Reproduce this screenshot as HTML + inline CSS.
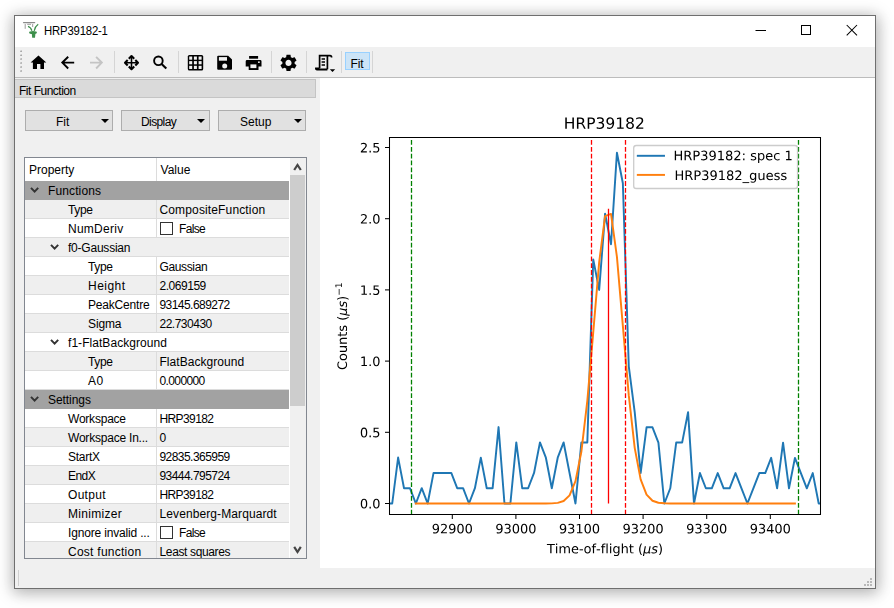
<!DOCTYPE html>
<html><head><meta charset="utf-8"><style>
*{margin:0;padding:0;box-sizing:border-box}
html,body{width:894px;height:608px;overflow:hidden;background:#fff;font-family:"Liberation Sans",sans-serif;font-size:12px;color:#000}
.abs{position:absolute}
#win{position:absolute;left:14px;top:15px;width:862px;height:574px;border:1px solid #6f6f6f;background:#f0f0f0;box-shadow:0 2px 14px 2px rgba(0,0,0,0.26),3px 4px 16px 0 rgba(0,0,0,0.07)}
#title{position:absolute;left:0;top:0;width:860px;height:31px;background:#fff}
#ttext{position:absolute;left:29px;top:8px;font-size:12.6px;letter-spacing:-0.2px;transform:scaleX(0.9);transform-origin:0 0}
#tb{position:absolute;left:0;top:31px;width:860px;height:31px;background:#f0f0f0;border-bottom:1px solid #bcbcbc}
.sep{position:absolute;top:4px;width:1px;height:22px;background:#d4d4d4}
#dock{position:absolute;left:0;top:62px;width:305px;height:490px;background:#f0f0f0}
#dtitle{position:absolute;left:0;top:1px;width:301px;height:19px;background:#dadada;border:1px solid #c4c4c4;border-left:none}
#dtitle span{position:absolute;left:4px;top:4px;letter-spacing:-0.5px}
.btn{position:absolute;top:32px;height:21px;background:#e1e1e1;border:1px solid #adadad}
.btn .t{position:absolute;top:4px}
.btn .ar{position:absolute;top:8px;width:0;height:0;border-left:4px solid transparent;border-right:4px solid transparent;border-top:4px solid #000}
#tree{position:absolute;left:9px;top:79px;width:283px;height:402px;border:1px solid #828790;background:#fff;overflow:hidden}
#thdr{position:absolute;left:0;top:0;width:264px;height:23px;background:#fff}
#thdr .lab{top:5px}
.row{position:absolute;left:0;width:264px;height:19px;background:#fff;border-bottom:1px solid #dcdcdc}
.row.alt{background:#efefef}
.row.hdr{background:#a2a2a2;border-bottom:1px solid #a2a2a2}
.lab{position:absolute;top:3px;white-space:nowrap}
.csep{position:absolute;left:131px;top:0;width:1px;height:19px;background:#dcdcdc}
.chv{position:absolute;top:6px;line-height:0}
.cb{position:absolute;left:135px;top:3px;width:13px;height:13px;border:1px solid #333;background:#fff}
#sb{position:absolute;left:265px;top:0;width:16px;height:400px;background:#f0f0f0}
#thumb{position:absolute;left:0;top:17px;width:15px;height:231px;background:#cdcdcd}
#canvas{position:absolute;left:305px;top:62px;width:555px;height:490px;background:#fff}
#status{position:absolute;left:0;top:552px;width:860px;height:20px;background:#f0f0f0}
</style></head><body>
<div id="win">
 <div id="title">
  <div id="ttext">HRP39182-1</div>
 </div>
 <div id="tb"></div>
 <div id="dock">
  <div id="dtitle"><span>Fit Function</span></div>
  <div class="btn" style="left:10px;width:88px"><span class="t" style="left:30px">Fit</span><span class="ar" style="left:75px"></span></div>
  <div class="btn" style="left:106px;width:89px"><span class="t" style="left:19px;letter-spacing:-0.6px">Display</span><span class="ar" style="left:75px"></span></div>
  <div class="btn" style="left:203px;width:88px"><span class="t" style="left:21px">Setup</span><span class="ar" style="left:75px"></span></div>
  <div id="tree">
   <div id="thdr"><span class="lab" style="left:4px;letter-spacing:0.00px;">Property</span><span class="lab" style="left:135.5px;letter-spacing:0.03px;">Value</span><span class="csep" style="height:23px"></span></div>
<div class="row hdr" style="top:23px"><span class="chv" style="left:5px"><svg class="chev" width="10" height="8" viewBox="0 0 10 8"><path d="M1 0.9 L4.6 4.6 L8.2 0.9" fill="none" stroke="#333" stroke-width="2"/></svg></span><span class="lab" style="left:23px;letter-spacing:0.12px;">Functions</span></div>
<div class="row alt" style="top:42px"><span class="lab" style="left:43px;letter-spacing:-0.33px;">Type</span><span class="csep"></span><span class="lab" style="left:134.5px;letter-spacing:0.14px;">CompositeFunction</span></div>
<div class="row " style="top:61px"><span class="lab" style="left:43px;letter-spacing:0.26px;">NumDeriv</span><span class="csep"></span><span class="cb"></span><span class="lab" style="left:154px;letter-spacing:-0.67px;">False</span></div>
<div class="row alt" style="top:80px"><span class="chv" style="left:25px"><svg class="chev" width="10" height="8" viewBox="0 0 10 8"><path d="M1 0.9 L4.6 4.6 L8.2 0.9" fill="none" stroke="#333" stroke-width="2"/></svg></span><span class="lab" style="left:43px;letter-spacing:-0.22px;">f0-Gaussian</span></div>
<div class="row " style="top:99px"><span class="lab" style="left:63px;letter-spacing:-0.33px;">Type</span><span class="csep"></span><span class="lab" style="left:134.5px;letter-spacing:-0.37px;">Gaussian</span></div>
<div class="row alt" style="top:118px"><span class="lab" style="left:63px;letter-spacing:0.46px;">Height</span><span class="csep"></span><span class="lab" style="left:134.5px;letter-spacing:-0.47px;">2.069159</span></div>
<div class="row " style="top:137px"><span class="lab" style="left:63px;letter-spacing:-0.19px;">PeakCentre</span><span class="csep"></span><span class="lab" style="left:134.5px;letter-spacing:-0.55px;">93145.689272</span></div>
<div class="row alt" style="top:156px"><span class="lab" style="left:63px;letter-spacing:-0.12px;">Sigma</span><span class="csep"></span><span class="lab" style="left:134.5px;letter-spacing:-0.50px;">22.730430</span></div>
<div class="row " style="top:175px"><span class="chv" style="left:25px"><svg class="chev" width="10" height="8" viewBox="0 0 10 8"><path d="M1 0.9 L4.6 4.6 L8.2 0.9" fill="none" stroke="#333" stroke-width="2"/></svg></span><span class="lab" style="left:43px;letter-spacing:0.05px;">f1-FlatBackground</span></div>
<div class="row alt" style="top:194px"><span class="lab" style="left:63px;letter-spacing:-0.33px;">Type</span><span class="csep"></span><span class="lab" style="left:134.5px;letter-spacing:0.04px;">FlatBackground</span></div>
<div class="row " style="top:213px"><span class="lab" style="left:63px;letter-spacing:0.50px;">A0</span><span class="csep"></span><span class="lab" style="left:134.5px;letter-spacing:-0.61px;">0.000000</span></div>
<div class="row hdr" style="top:232px"><span class="chv" style="left:5px"><svg class="chev" width="10" height="8" viewBox="0 0 10 8"><path d="M1 0.9 L4.6 4.6 L8.2 0.9" fill="none" stroke="#333" stroke-width="2"/></svg></span><span class="lab" style="left:23px;letter-spacing:-0.06px;">Settings</span></div>
<div class="row " style="top:251px"><span class="lab" style="left:43px;letter-spacing:-0.22px;">Workspace</span><span class="csep"></span><span class="lab" style="left:134.5px;letter-spacing:-0.61px;">HRP39182</span></div>
<div class="row alt" style="top:270px"><span class="lab" style="left:43px;letter-spacing:-0.21px;">Workspace In...</span><span class="csep"></span><span class="lab" style="left:134.5px;">0</span></div>
<div class="row " style="top:289px"><span class="lab" style="left:43px;letter-spacing:-0.28px;">StartX</span><span class="csep"></span><span class="lab" style="left:134.5px;letter-spacing:-0.55px;">92835.365959</span></div>
<div class="row alt" style="top:308px"><span class="lab" style="left:43px;letter-spacing:-0.53px;">EndX</span><span class="csep"></span><span class="lab" style="left:134.5px;letter-spacing:-0.55px;">93444.795724</span></div>
<div class="row " style="top:327px"><span class="lab" style="left:43px;letter-spacing:0.30px;">Output</span><span class="csep"></span><span class="lab" style="left:134.5px;letter-spacing:-0.61px;">HRP39182</span></div>
<div class="row alt" style="top:346px"><span class="lab" style="left:43px;letter-spacing:0.30px;">Minimizer</span><span class="csep"></span><span class="lab" style="left:134.5px;letter-spacing:0.10px;">Levenberg-Marquardt</span></div>
<div class="row " style="top:365px"><span class="lab" style="left:43px;letter-spacing:-0.17px;">Ignore invalid ...</span><span class="csep"></span><span class="cb"></span><span class="lab" style="left:154px;letter-spacing:-0.67px;">False</span></div>
<div class="row alt" style="top:384px"><span class="lab" style="left:43px;letter-spacing:0.26px;">Cost function</span><span class="csep"></span><span class="lab" style="left:134.5px;letter-spacing:-0.36px;">Least squares</span></div>
   <div id="sb"><div id="thumb"></div></div>
  </div>
 </div>
 <div id="canvas"><svg width="555" height="490" viewBox="0 0 429.677419 379.354839" version="1.1">
<defs>
<style type="text/css">#canvas svg *{stroke-linejoin: round; stroke-linecap: butt}</style>
</defs>
<g id="figure_1">
<g id="patch_1">
<path d="M 0 379.354839 
L 429.677419 379.354839 
L 429.677419 0 
L 0 0 
z
" style="fill: #ffffff"/>
</g>
<g id="axes_1">
<g id="patch_2">
<path d="M 53.806452 337.935484 
L 387.483871 337.935484 
L 387.483871 46.064516 
L 53.806452 46.064516 
z
" style="fill: #ffffff"/>
</g>
<g id="matplotlib.axis_1">
<g id="xtick_1">
<g id="line2d_1">
<defs>
<path id="m1504cfccaf" d="M 0 0 
L 0 3.5 
" style="stroke: #000000; stroke-width: 0.8"/>
</defs>
<g>
<use href="#m1504cfccaf" x="102.424966" y="337.935484" style="stroke: #000000; stroke-width: 0.8"/>
</g>
</g>
<g id="text_1">
<!-- 92900 -->
<g transform="translate(86.518716 352.533921) scale(0.1 -0.1)">
<defs>
<path id="DejaVuSans-39" d="M 703 97 
L 703 672 
Q 941 559 1184 500 
Q 1428 441 1663 441 
Q 2288 441 2617 861 
Q 2947 1281 2994 2138 
Q 2813 1869 2534 1725 
Q 2256 1581 1919 1581 
Q 1219 1581 811 2004 
Q 403 2428 403 3163 
Q 403 3881 828 4315 
Q 1253 4750 1959 4750 
Q 2769 4750 3195 4129 
Q 3622 3509 3622 2328 
Q 3622 1225 3098 567 
Q 2575 -91 1691 -91 
Q 1453 -91 1209 -44 
Q 966 3 703 97 
z
M 1959 2075 
Q 2384 2075 2632 2365 
Q 2881 2656 2881 3163 
Q 2881 3666 2632 3958 
Q 2384 4250 1959 4250 
Q 1534 4250 1286 3958 
Q 1038 3666 1038 3163 
Q 1038 2656 1286 2365 
Q 1534 2075 1959 2075 
z
" transform="scale(0.015625)"/>
<path id="DejaVuSans-32" d="M 1228 531 
L 3431 531 
L 3431 0 
L 469 0 
L 469 531 
Q 828 903 1448 1529 
Q 2069 2156 2228 2338 
Q 2531 2678 2651 2914 
Q 2772 3150 2772 3378 
Q 2772 3750 2511 3984 
Q 2250 4219 1831 4219 
Q 1534 4219 1204 4116 
Q 875 4013 500 3803 
L 500 4441 
Q 881 4594 1212 4672 
Q 1544 4750 1819 4750 
Q 2544 4750 2975 4387 
Q 3406 4025 3406 3419 
Q 3406 3131 3298 2873 
Q 3191 2616 2906 2266 
Q 2828 2175 2409 1742 
Q 1991 1309 1228 531 
z
" transform="scale(0.015625)"/>
<path id="DejaVuSans-30" d="M 2034 4250 
Q 1547 4250 1301 3770 
Q 1056 3291 1056 2328 
Q 1056 1369 1301 889 
Q 1547 409 2034 409 
Q 2525 409 2770 889 
Q 3016 1369 3016 2328 
Q 3016 3291 2770 3770 
Q 2525 4250 2034 4250 
z
M 2034 4750 
Q 2819 4750 3233 4129 
Q 3647 3509 3647 2328 
Q 3647 1150 3233 529 
Q 2819 -91 2034 -91 
Q 1250 -91 836 529 
Q 422 1150 422 2328 
Q 422 3509 836 4129 
Q 1250 4750 2034 4750 
z
" transform="scale(0.015625)"/>
</defs>
<use href="#DejaVuSans-39"/>
<use href="#DejaVuSans-32" transform="translate(63.623047 0)"/>
<use href="#DejaVuSans-39" transform="translate(127.246094 0)"/>
<use href="#DejaVuSans-30" transform="translate(190.869141 0)"/>
<use href="#DejaVuSans-30" transform="translate(254.492188 0)"/>
</g>
</g>
</g>
<g id="xtick_2">
<g id="line2d_2">
<g>
<use href="#m1504cfccaf" x="151.66389" y="337.935484" style="stroke: #000000; stroke-width: 0.8"/>
</g>
</g>
<g id="text_2">
<!-- 93000 -->
<g transform="translate(135.75764 352.533921) scale(0.1 -0.1)">
<defs>
<path id="DejaVuSans-33" d="M 2597 2516 
Q 3050 2419 3304 2112 
Q 3559 1806 3559 1356 
Q 3559 666 3084 287 
Q 2609 -91 1734 -91 
Q 1441 -91 1130 -33 
Q 819 25 488 141 
L 488 750 
Q 750 597 1062 519 
Q 1375 441 1716 441 
Q 2309 441 2620 675 
Q 2931 909 2931 1356 
Q 2931 1769 2642 2001 
Q 2353 2234 1838 2234 
L 1294 2234 
L 1294 2753 
L 1863 2753 
Q 2328 2753 2575 2939 
Q 2822 3125 2822 3475 
Q 2822 3834 2567 4026 
Q 2313 4219 1838 4219 
Q 1578 4219 1281 4162 
Q 984 4106 628 3988 
L 628 4550 
Q 988 4650 1302 4700 
Q 1616 4750 1894 4750 
Q 2613 4750 3031 4423 
Q 3450 4097 3450 3541 
Q 3450 3153 3228 2886 
Q 3006 2619 2597 2516 
z
" transform="scale(0.015625)"/>
</defs>
<use href="#DejaVuSans-39"/>
<use href="#DejaVuSans-33" transform="translate(63.623047 0)"/>
<use href="#DejaVuSans-30" transform="translate(127.246094 0)"/>
<use href="#DejaVuSans-30" transform="translate(190.869141 0)"/>
<use href="#DejaVuSans-30" transform="translate(254.492188 0)"/>
</g>
</g>
</g>
<g id="xtick_3">
<g id="line2d_3">
<g>
<use href="#m1504cfccaf" x="200.902815" y="337.935484" style="stroke: #000000; stroke-width: 0.8"/>
</g>
</g>
<g id="text_3">
<!-- 93100 -->
<g transform="translate(184.996565 352.533921) scale(0.1 -0.1)">
<defs>
<path id="DejaVuSans-31" d="M 794 531 
L 1825 531 
L 1825 4091 
L 703 3866 
L 703 4441 
L 1819 4666 
L 2450 4666 
L 2450 531 
L 3481 531 
L 3481 0 
L 794 0 
L 794 531 
z
" transform="scale(0.015625)"/>
</defs>
<use href="#DejaVuSans-39"/>
<use href="#DejaVuSans-33" transform="translate(63.623047 0)"/>
<use href="#DejaVuSans-31" transform="translate(127.246094 0)"/>
<use href="#DejaVuSans-30" transform="translate(190.869141 0)"/>
<use href="#DejaVuSans-30" transform="translate(254.492188 0)"/>
</g>
</g>
</g>
<g id="xtick_4">
<g id="line2d_4">
<g>
<use href="#m1504cfccaf" x="250.141739" y="337.935484" style="stroke: #000000; stroke-width: 0.8"/>
</g>
</g>
<g id="text_4">
<!-- 93200 -->
<g transform="translate(234.235489 352.533921) scale(0.1 -0.1)">
<use href="#DejaVuSans-39"/>
<use href="#DejaVuSans-33" transform="translate(63.623047 0)"/>
<use href="#DejaVuSans-32" transform="translate(127.246094 0)"/>
<use href="#DejaVuSans-30" transform="translate(190.869141 0)"/>
<use href="#DejaVuSans-30" transform="translate(254.492188 0)"/>
</g>
</g>
</g>
<g id="xtick_5">
<g id="line2d_5">
<g>
<use href="#m1504cfccaf" x="299.380663" y="337.935484" style="stroke: #000000; stroke-width: 0.8"/>
</g>
</g>
<g id="text_5">
<!-- 93300 -->
<g transform="translate(283.474413 352.533921) scale(0.1 -0.1)">
<use href="#DejaVuSans-39"/>
<use href="#DejaVuSans-33" transform="translate(63.623047 0)"/>
<use href="#DejaVuSans-33" transform="translate(127.246094 0)"/>
<use href="#DejaVuSans-30" transform="translate(190.869141 0)"/>
<use href="#DejaVuSans-30" transform="translate(254.492188 0)"/>
</g>
</g>
</g>
<g id="xtick_6">
<g id="line2d_6">
<g>
<use href="#m1504cfccaf" x="348.619588" y="337.935484" style="stroke: #000000; stroke-width: 0.8"/>
</g>
</g>
<g id="text_6">
<!-- 93400 -->
<g transform="translate(332.713338 352.533921) scale(0.1 -0.1)">
<defs>
<path id="DejaVuSans-34" d="M 2419 4116 
L 825 1625 
L 2419 1625 
L 2419 4116 
z
M 2253 4666 
L 3047 4666 
L 3047 1625 
L 3713 1625 
L 3713 1100 
L 3047 1100 
L 3047 0 
L 2419 0 
L 2419 1100 
L 313 1100 
L 313 1709 
L 2253 4666 
z
" transform="scale(0.015625)"/>
</defs>
<use href="#DejaVuSans-39"/>
<use href="#DejaVuSans-33" transform="translate(63.623047 0)"/>
<use href="#DejaVuSans-34" transform="translate(127.246094 0)"/>
<use href="#DejaVuSans-30" transform="translate(190.869141 0)"/>
<use href="#DejaVuSans-30" transform="translate(254.492188 0)"/>
</g>
</g>
</g>
<g id="text_7">
<!-- Time-of-flight ($\mu s$) -->
<g transform="translate(175.695161 368.013609) scale(0.1 -0.1)">
<defs>
<path id="DejaVuSans-54" d="M -19 4666 
L 3928 4666 
L 3928 4134 
L 2272 4134 
L 2272 0 
L 1638 0 
L 1638 4134 
L -19 4134 
L -19 4666 
z
" transform="scale(0.015625)"/>
<path id="DejaVuSans-69" d="M 603 3500 
L 1178 3500 
L 1178 0 
L 603 0 
L 603 3500 
z
M 603 4863 
L 1178 4863 
L 1178 4134 
L 603 4134 
L 603 4863 
z
" transform="scale(0.015625)"/>
<path id="DejaVuSans-6d" d="M 3328 2828 
Q 3544 3216 3844 3400 
Q 4144 3584 4550 3584 
Q 5097 3584 5394 3201 
Q 5691 2819 5691 2113 
L 5691 0 
L 5113 0 
L 5113 2094 
Q 5113 2597 4934 2840 
Q 4756 3084 4391 3084 
Q 3944 3084 3684 2787 
Q 3425 2491 3425 1978 
L 3425 0 
L 2847 0 
L 2847 2094 
Q 2847 2600 2669 2842 
Q 2491 3084 2119 3084 
Q 1678 3084 1418 2786 
Q 1159 2488 1159 1978 
L 1159 0 
L 581 0 
L 581 3500 
L 1159 3500 
L 1159 2956 
Q 1356 3278 1631 3431 
Q 1906 3584 2284 3584 
Q 2666 3584 2933 3390 
Q 3200 3197 3328 2828 
z
" transform="scale(0.015625)"/>
<path id="DejaVuSans-65" d="M 3597 1894 
L 3597 1613 
L 953 1613 
Q 991 1019 1311 708 
Q 1631 397 2203 397 
Q 2534 397 2845 478 
Q 3156 559 3463 722 
L 3463 178 
Q 3153 47 2828 -22 
Q 2503 -91 2169 -91 
Q 1331 -91 842 396 
Q 353 884 353 1716 
Q 353 2575 817 3079 
Q 1281 3584 2069 3584 
Q 2775 3584 3186 3129 
Q 3597 2675 3597 1894 
z
M 3022 2063 
Q 3016 2534 2758 2815 
Q 2500 3097 2075 3097 
Q 1594 3097 1305 2825 
Q 1016 2553 972 2059 
L 3022 2063 
z
" transform="scale(0.015625)"/>
<path id="DejaVuSans-2d" d="M 313 2009 
L 1997 2009 
L 1997 1497 
L 313 1497 
L 313 2009 
z
" transform="scale(0.015625)"/>
<path id="DejaVuSans-6f" d="M 1959 3097 
Q 1497 3097 1228 2736 
Q 959 2375 959 1747 
Q 959 1119 1226 758 
Q 1494 397 1959 397 
Q 2419 397 2687 759 
Q 2956 1122 2956 1747 
Q 2956 2369 2687 2733 
Q 2419 3097 1959 3097 
z
M 1959 3584 
Q 2709 3584 3137 3096 
Q 3566 2609 3566 1747 
Q 3566 888 3137 398 
Q 2709 -91 1959 -91 
Q 1206 -91 779 398 
Q 353 888 353 1747 
Q 353 2609 779 3096 
Q 1206 3584 1959 3584 
z
" transform="scale(0.015625)"/>
<path id="DejaVuSans-66" d="M 2375 4863 
L 2375 4384 
L 1825 4384 
Q 1516 4384 1395 4259 
Q 1275 4134 1275 3809 
L 1275 3500 
L 2222 3500 
L 2222 3053 
L 1275 3053 
L 1275 0 
L 697 0 
L 697 3053 
L 147 3053 
L 147 3500 
L 697 3500 
L 697 3744 
Q 697 4328 969 4595 
Q 1241 4863 1831 4863 
L 2375 4863 
z
" transform="scale(0.015625)"/>
<path id="DejaVuSans-6c" d="M 603 4863 
L 1178 4863 
L 1178 0 
L 603 0 
L 603 4863 
z
" transform="scale(0.015625)"/>
<path id="DejaVuSans-67" d="M 2906 1791 
Q 2906 2416 2648 2759 
Q 2391 3103 1925 3103 
Q 1463 3103 1205 2759 
Q 947 2416 947 1791 
Q 947 1169 1205 825 
Q 1463 481 1925 481 
Q 2391 481 2648 825 
Q 2906 1169 2906 1791 
z
M 3481 434 
Q 3481 -459 3084 -895 
Q 2688 -1331 1869 -1331 
Q 1566 -1331 1297 -1286 
Q 1028 -1241 775 -1147 
L 775 -588 
Q 1028 -725 1275 -790 
Q 1522 -856 1778 -856 
Q 2344 -856 2625 -561 
Q 2906 -266 2906 331 
L 2906 616 
Q 2728 306 2450 153 
Q 2172 0 1784 0 
Q 1141 0 747 490 
Q 353 981 353 1791 
Q 353 2603 747 3093 
Q 1141 3584 1784 3584 
Q 2172 3584 2450 3431 
Q 2728 3278 2906 2969 
L 2906 3500 
L 3481 3500 
L 3481 434 
z
" transform="scale(0.015625)"/>
<path id="DejaVuSans-68" d="M 3513 2113 
L 3513 0 
L 2938 0 
L 2938 2094 
Q 2938 2591 2744 2837 
Q 2550 3084 2163 3084 
Q 1697 3084 1428 2787 
Q 1159 2491 1159 1978 
L 1159 0 
L 581 0 
L 581 4863 
L 1159 4863 
L 1159 2956 
Q 1366 3272 1645 3428 
Q 1925 3584 2291 3584 
Q 2894 3584 3203 3211 
Q 3513 2838 3513 2113 
z
" transform="scale(0.015625)"/>
<path id="DejaVuSans-74" d="M 1172 4494 
L 1172 3500 
L 2356 3500 
L 2356 3053 
L 1172 3053 
L 1172 1153 
Q 1172 725 1289 603 
Q 1406 481 1766 481 
L 2356 481 
L 2356 0 
L 1766 0 
Q 1100 0 847 248 
Q 594 497 594 1153 
L 594 3053 
L 172 3053 
L 172 3500 
L 594 3500 
L 594 4494 
L 1172 4494 
z
" transform="scale(0.015625)"/>
<path id="DejaVuSans-20" transform="scale(0.015625)"/>
<path id="DejaVuSans-28" d="M 1984 4856 
Q 1566 4138 1362 3434 
Q 1159 2731 1159 2009 
Q 1159 1288 1364 580 
Q 1569 -128 1984 -844 
L 1484 -844 
Q 1016 -109 783 600 
Q 550 1309 550 2009 
Q 550 2706 781 3412 
Q 1013 4119 1484 4856 
L 1984 4856 
z
" transform="scale(0.015625)"/>
<path id="DejaVuSans-Oblique-3bc" d="M -84 -1331 
L 856 3500 
L 1434 3500 
L 1009 1322 
Q 997 1256 987 1175 
Q 978 1094 978 1013 
Q 978 722 1161 565 
Q 1344 409 1684 409 
Q 2147 409 2431 671 
Q 2716 934 2816 1459 
L 3213 3500 
L 3788 3500 
L 3266 809 
Q 3253 750 3248 706 
Q 3244 663 3244 628 
Q 3244 531 3283 486 
Q 3322 441 3406 441 
Q 3438 441 3492 456 
Q 3547 472 3647 513 
L 3559 50 
Q 3422 -19 3297 -55 
Q 3172 -91 3053 -91 
Q 2847 -91 2730 40 
Q 2613 172 2613 403 
Q 2438 153 2195 31 
Q 1953 -91 1625 -91 
Q 1334 -91 1117 43 
Q 900 178 831 397 
L 494 -1331 
L -84 -1331 
z
" transform="scale(0.015625)"/>
<path id="DejaVuSans-Oblique-73" d="M 3200 3397 
L 3091 2853 
Q 2863 2978 2609 3040 
Q 2356 3103 2088 3103 
Q 1634 3103 1373 2948 
Q 1113 2794 1113 2528 
Q 1113 2219 1719 2053 
Q 1766 2041 1788 2034 
L 1972 1978 
Q 2547 1819 2739 1644 
Q 2931 1469 2931 1166 
Q 2931 609 2489 259 
Q 2047 -91 1331 -91 
Q 1053 -91 747 -37 
Q 441 16 72 128 
L 184 722 
Q 500 559 806 475 
Q 1113 391 1394 391 
Q 1816 391 2080 572 
Q 2344 753 2344 1031 
Q 2344 1331 1650 1516 
L 1591 1531 
L 1394 1581 
Q 956 1697 753 1886 
Q 550 2075 550 2369 
Q 550 2928 970 3256 
Q 1391 3584 2113 3584 
Q 2397 3584 2667 3537 
Q 2938 3491 3200 3397 
z
" transform="scale(0.015625)"/>
<path id="DejaVuSans-29" d="M 513 4856 
L 1013 4856 
Q 1481 4119 1714 3412 
Q 1947 2706 1947 2009 
Q 1947 1309 1714 600 
Q 1481 -109 1013 -844 
L 513 -844 
Q 928 -128 1133 580 
Q 1338 1288 1338 2009 
Q 1338 2731 1133 3434 
Q 928 4138 513 4856 
z
" transform="scale(0.015625)"/>
</defs>
<use href="#DejaVuSans-54" transform="translate(0 0.015625)"/>
<use href="#DejaVuSans-69" transform="translate(61.083984 0.015625)"/>
<use href="#DejaVuSans-6d" transform="translate(88.867188 0.015625)"/>
<use href="#DejaVuSans-65" transform="translate(186.279297 0.015625)"/>
<use href="#DejaVuSans-2d" transform="translate(247.802734 0.015625)"/>
<use href="#DejaVuSans-6f" transform="translate(283.886719 0.015625)"/>
<use href="#DejaVuSans-66" transform="translate(345.068359 0.015625)"/>
<use href="#DejaVuSans-2d" transform="translate(380.273438 0.015625)"/>
<use href="#DejaVuSans-66" transform="translate(416.357422 0.015625)"/>
<use href="#DejaVuSans-6c" transform="translate(451.5625 0.015625)"/>
<use href="#DejaVuSans-69" transform="translate(479.345703 0.015625)"/>
<use href="#DejaVuSans-67" transform="translate(507.128906 0.015625)"/>
<use href="#DejaVuSans-68" transform="translate(570.605469 0.015625)"/>
<use href="#DejaVuSans-74" transform="translate(633.984375 0.015625)"/>
<use href="#DejaVuSans-20" transform="translate(673.193359 0.015625)"/>
<use href="#DejaVuSans-28" transform="translate(704.980469 0.015625)"/>
<use href="#DejaVuSans-Oblique-3bc" transform="translate(743.994141 0.015625)"/>
<use href="#DejaVuSans-Oblique-73" transform="translate(807.617188 0.015625)"/>
<use href="#DejaVuSans-29" transform="translate(859.716797 0.015625)"/>
</g>
</g>
</g>
<g id="matplotlib.axis_2">
<g id="ytick_1">
<g id="line2d_7">
<defs>
<path id="m5d545ce8f8" d="M 0 0 
L -3.5 0 
" style="stroke: #000000; stroke-width: 0.8"/>
</defs>
<g>
<use href="#m5d545ce8f8" x="53.806452" y="329.419355" style="stroke: #000000; stroke-width: 0.8"/>
</g>
</g>
<g id="text_8">
<!-- 0.0 -->
<g transform="translate(30.903327 333.218574) scale(0.1 -0.1)">
<defs>
<path id="DejaVuSans-2e" d="M 684 794 
L 1344 794 
L 1344 0 
L 684 0 
L 684 794 
z
" transform="scale(0.015625)"/>
</defs>
<use href="#DejaVuSans-30"/>
<use href="#DejaVuSans-2e" transform="translate(63.623047 0)"/>
<use href="#DejaVuSans-30" transform="translate(95.410156 0)"/>
</g>
</g>
</g>
<g id="ytick_2">
<g id="line2d_8">
<g>
<use href="#m5d545ce8f8" x="53.806452" y="274.296774" style="stroke: #000000; stroke-width: 0.8"/>
</g>
</g>
<g id="text_9">
<!-- 0.5 -->
<g transform="translate(30.903327 278.095993) scale(0.1 -0.1)">
<defs>
<path id="DejaVuSans-35" d="M 691 4666 
L 3169 4666 
L 3169 4134 
L 1269 4134 
L 1269 2991 
Q 1406 3038 1543 3061 
Q 1681 3084 1819 3084 
Q 2600 3084 3056 2656 
Q 3513 2228 3513 1497 
Q 3513 744 3044 326 
Q 2575 -91 1722 -91 
Q 1428 -91 1123 -41 
Q 819 9 494 109 
L 494 744 
Q 775 591 1075 516 
Q 1375 441 1709 441 
Q 2250 441 2565 725 
Q 2881 1009 2881 1497 
Q 2881 1984 2565 2268 
Q 2250 2553 1709 2553 
Q 1456 2553 1204 2497 
Q 953 2441 691 2322 
L 691 4666 
z
" transform="scale(0.015625)"/>
</defs>
<use href="#DejaVuSans-30"/>
<use href="#DejaVuSans-2e" transform="translate(63.623047 0)"/>
<use href="#DejaVuSans-35" transform="translate(95.410156 0)"/>
</g>
</g>
</g>
<g id="ytick_3">
<g id="line2d_9">
<g>
<use href="#m5d545ce8f8" x="53.806452" y="219.174194" style="stroke: #000000; stroke-width: 0.8"/>
</g>
</g>
<g id="text_10">
<!-- 1.0 -->
<g transform="translate(30.903327 222.973412) scale(0.1 -0.1)">
<use href="#DejaVuSans-31"/>
<use href="#DejaVuSans-2e" transform="translate(63.623047 0)"/>
<use href="#DejaVuSans-30" transform="translate(95.410156 0)"/>
</g>
</g>
</g>
<g id="ytick_4">
<g id="line2d_10">
<g>
<use href="#m5d545ce8f8" x="53.806452" y="164.051613" style="stroke: #000000; stroke-width: 0.8"/>
</g>
</g>
<g id="text_11">
<!-- 1.5 -->
<g transform="translate(30.903327 167.850832) scale(0.1 -0.1)">
<use href="#DejaVuSans-31"/>
<use href="#DejaVuSans-2e" transform="translate(63.623047 0)"/>
<use href="#DejaVuSans-35" transform="translate(95.410156 0)"/>
</g>
</g>
</g>
<g id="ytick_5">
<g id="line2d_11">
<g>
<use href="#m5d545ce8f8" x="53.806452" y="108.929032" style="stroke: #000000; stroke-width: 0.8"/>
</g>
</g>
<g id="text_12">
<!-- 2.0 -->
<g transform="translate(30.903327 112.728251) scale(0.1 -0.1)">
<use href="#DejaVuSans-32"/>
<use href="#DejaVuSans-2e" transform="translate(63.623047 0)"/>
<use href="#DejaVuSans-30" transform="translate(95.410156 0)"/>
</g>
</g>
</g>
<g id="ytick_6">
<g id="line2d_12">
<g>
<use href="#m5d545ce8f8" x="53.806452" y="53.806452" style="stroke: #000000; stroke-width: 0.8"/>
</g>
</g>
<g id="text_13">
<!-- 2.5 -->
<g transform="translate(30.903327 57.60567) scale(0.1 -0.1)">
<use href="#DejaVuSans-32"/>
<use href="#DejaVuSans-2e" transform="translate(63.623047 0)"/>
<use href="#DejaVuSans-35" transform="translate(95.410156 0)"/>
</g>
</g>
</g>
<g id="text_14">
<!-- Counts ($\mu s$)$^{-1}$ -->
<g transform="translate(20.903327 226.1) rotate(-90) scale(0.1 -0.1)">
<defs>
<path id="DejaVuSans-43" d="M 4122 4306 
L 4122 3641 
Q 3803 3938 3442 4084 
Q 3081 4231 2675 4231 
Q 1875 4231 1450 3742 
Q 1025 3253 1025 2328 
Q 1025 1406 1450 917 
Q 1875 428 2675 428 
Q 3081 428 3442 575 
Q 3803 722 4122 1019 
L 4122 359 
Q 3791 134 3420 21 
Q 3050 -91 2638 -91 
Q 1578 -91 968 557 
Q 359 1206 359 2328 
Q 359 3453 968 4101 
Q 1578 4750 2638 4750 
Q 3056 4750 3426 4639 
Q 3797 4528 4122 4306 
z
" transform="scale(0.015625)"/>
<path id="DejaVuSans-75" d="M 544 1381 
L 544 3500 
L 1119 3500 
L 1119 1403 
Q 1119 906 1312 657 
Q 1506 409 1894 409 
Q 2359 409 2629 706 
Q 2900 1003 2900 1516 
L 2900 3500 
L 3475 3500 
L 3475 0 
L 2900 0 
L 2900 538 
Q 2691 219 2414 64 
Q 2138 -91 1772 -91 
Q 1169 -91 856 284 
Q 544 659 544 1381 
z
M 1991 3584 
L 1991 3584 
z
" transform="scale(0.015625)"/>
<path id="DejaVuSans-6e" d="M 3513 2113 
L 3513 0 
L 2938 0 
L 2938 2094 
Q 2938 2591 2744 2837 
Q 2550 3084 2163 3084 
Q 1697 3084 1428 2787 
Q 1159 2491 1159 1978 
L 1159 0 
L 581 0 
L 581 3500 
L 1159 3500 
L 1159 2956 
Q 1366 3272 1645 3428 
Q 1925 3584 2291 3584 
Q 2894 3584 3203 3211 
Q 3513 2838 3513 2113 
z
" transform="scale(0.015625)"/>
<path id="DejaVuSans-73" d="M 2834 3397 
L 2834 2853 
Q 2591 2978 2328 3040 
Q 2066 3103 1784 3103 
Q 1356 3103 1142 2972 
Q 928 2841 928 2578 
Q 928 2378 1081 2264 
Q 1234 2150 1697 2047 
L 1894 2003 
Q 2506 1872 2764 1633 
Q 3022 1394 3022 966 
Q 3022 478 2636 193 
Q 2250 -91 1575 -91 
Q 1294 -91 989 -36 
Q 684 19 347 128 
L 347 722 
Q 666 556 975 473 
Q 1284 391 1588 391 
Q 1994 391 2212 530 
Q 2431 669 2431 922 
Q 2431 1156 2273 1281 
Q 2116 1406 1581 1522 
L 1381 1569 
Q 847 1681 609 1914 
Q 372 2147 372 2553 
Q 372 3047 722 3315 
Q 1072 3584 1716 3584 
Q 2034 3584 2315 3537 
Q 2597 3491 2834 3397 
z
" transform="scale(0.015625)"/>
<path id="DejaVuSans-2212" d="M 678 2272 
L 4684 2272 
L 4684 1741 
L 678 1741 
L 678 2272 
z
" transform="scale(0.015625)"/>
</defs>
<use href="#DejaVuSans-43" transform="translate(0 0.684375)"/>
<use href="#DejaVuSans-6f" transform="translate(69.824219 0.684375)"/>
<use href="#DejaVuSans-75" transform="translate(131.005859 0.684375)"/>
<use href="#DejaVuSans-6e" transform="translate(194.384766 0.684375)"/>
<use href="#DejaVuSans-74" transform="translate(257.763672 0.684375)"/>
<use href="#DejaVuSans-73" transform="translate(296.972656 0.684375)"/>
<use href="#DejaVuSans-20" transform="translate(349.072266 0.684375)"/>
<use href="#DejaVuSans-28" transform="translate(380.859375 0.684375)"/>
<use href="#DejaVuSans-Oblique-3bc" transform="translate(419.873047 0.684375)"/>
<use href="#DejaVuSans-Oblique-73" transform="translate(483.496094 0.684375)"/>
<use href="#DejaVuSans-29" transform="translate(535.595703 0.684375)"/>
<use href="#DejaVuSans-2212" transform="translate(575.566406 38.965625) scale(0.7)"/>
<use href="#DejaVuSans-31" transform="translate(634.21875 38.965625) scale(0.7)"/>
</g>
</g>
</g>
<g id="line2d_13">
<path d="M 51.34469 329.419355 
L 55.913878 329.419355 
L 60.483523 293.867404 
L 65.053624 317.56989 
L 69.624183 317.571074 
L 74.195199 329.419355 
L 78.766673 317.573444 
L 83.338603 329.419355 
L 87.91099 305.73227 
L 92.483835 305.734639 
L 97.057137 305.737007 
L 101.630896 305.739375 
L 106.205113 317.580549 
L 110.779787 317.581733 
L 115.354919 329.419355 
L 119.930508 317.5841 
L 124.506554 293.91714 
L 129.083058 317.586466 
L 133.66002 317.58765 
L 138.23744 270.266744 
L 142.815317 329.419355 
L 147.393652 329.419355 
L 151.972445 282.11146 
L 156.551696 317.593564 
L 161.131405 317.594746 
L 165.711572 305.772502 
L 170.292196 282.130378 
L 174.873279 293.956169 
L 179.45482 317.599475 
L 184.036819 293.96326 
L 188.619276 282.149289 
L 193.202192 305.786685 
L 197.785566 329.419355 
L 202.369398 282.163467 
L 206.953688 282.168192 
L 211.538437 140.433603 
L 216.123645 164.073357 
L 220.709311 105.043652 
L 225.295435 128.682221 
L 229.882018 57.860976 
L 234.46906 81.49954 
L 239.056561 223.17863 
L 243.64452 258.599287 
L 248.232938 305.815026 
L 252.821815 270.414433 
L 257.411151 270.420333 
L 262.000945 282.224857 
L 266.591199 329.419355 
L 271.181912 317.62309 
L 275.773083 282.239012 
L 280.364714 282.24373 
L 284.956804 258.662993 
L 289.549354 329.419355 
L 294.142362 305.838617 
L 298.73583 317.630165 
L 303.329757 317.631344 
L 307.924144 305.84569 
L 312.51899 317.633701 
L 317.114295 317.634879 
L 321.71006 305.852761 
L 326.306285 317.637236 
L 330.902969 329.419355 
L 335.500113 317.639592 
L 340.097717 305.862185 
L 344.69578 305.864541 
L 349.294303 294.090666 
L 353.893286 317.644303 
L 358.492729 282.323856 
L 363.092632 317.646657 
L 367.692995 294.104794 
L 372.293818 305.878668 
L 376.895101 317.650189 
L 381.496844 305.883376 
L 386.099047 329.419355 
L 390.70171 329.419355 
" clip-path="url(#p1a51e9b3a9)" style="fill: none; stroke: #1f77b4; stroke-width: 1.5; stroke-linecap: square"/>
</g>
<g id="line2d_14">
<path d="M 74.195199 329.419355 
L 78.766673 329.419355 
L 83.338603 329.419355 
L 87.91099 329.419355 
L 92.483835 329.419355 
L 97.057137 329.419355 
L 101.630896 329.419355 
L 106.205113 329.419355 
L 110.779787 329.419355 
L 115.354919 329.419355 
L 119.930508 329.419355 
L 124.506554 329.419355 
L 129.083058 329.419355 
L 133.66002 329.419355 
L 138.23744 329.419355 
L 142.815317 329.419355 
L 147.393652 329.419355 
L 151.972445 329.419354 
L 156.551696 329.41935 
L 161.131405 329.419307 
L 165.711572 329.418931 
L 170.292196 329.416162 
L 174.873279 329.399018 
L 179.45482 329.309795 
L 184.036819 328.920116 
L 188.619276 327.495233 
L 193.202192 323.147423 
L 197.785566 312.129437 
L 202.369398 289.111879 
L 206.953688 249.957718 
L 211.538437 196.958734 
L 216.123645 142.716233 
L 220.709311 106.919351 
L 225.295435 105.237608 
L 229.882018 138.460245 
L 234.46906 191.911173 
L 239.056561 245.716005 
L 243.64452 286.350692 
L 248.232938 310.688297 
L 252.821815 322.534042 
L 257.411151 327.280292 
L 262.000945 328.857738 
L 266.591199 329.294745 
L 271.181912 329.395991 
L 275.773083 329.415653 
L 280.364714 329.418859 
L 284.956804 329.419299 
L 289.549354 329.419349 
L 294.142362 329.419354 
L 298.73583 329.419355 
L 303.329757 329.419355 
L 307.924144 329.419355 
L 312.51899 329.419355 
L 317.114295 329.419355 
L 321.71006 329.419355 
L 326.306285 329.419355 
L 330.902969 329.419355 
L 335.500113 329.419355 
L 340.097717 329.419355 
L 344.69578 329.419355 
L 349.294303 329.419355 
L 353.893286 329.419355 
L 358.492729 329.419355 
L 363.092632 329.419355 
L 367.692995 329.419355 
" clip-path="url(#p1a51e9b3a9)" style="fill: none; stroke: #ff7f0e; stroke-width: 1.5; stroke-linecap: square"/>
</g>
<g id="LineCollection_1">
<path d="M 223.354839 329.419355 
L 223.354839 101.304587 
" clip-path="url(#p1a51e9b3a9)" style="fill: none; stroke: #ff0000"/>
</g>
<g id="line2d_15">
<path d="M 210.193548 337.935484 
L 210.193548 46.064516 
" clip-path="url(#p1a51e9b3a9)" style="fill: none; stroke-dasharray: 3.7,1.6; stroke-dashoffset: 0; stroke: #ff0000"/>
</g>
<g id="line2d_16">
<path d="M 236.516129 337.935484 
L 236.516129 46.064516 
" clip-path="url(#p1a51e9b3a9)" style="fill: none; stroke-dasharray: 3.7,1.6; stroke-dashoffset: 0; stroke: #ff0000"/>
</g>
<g id="line2d_17">
<path d="M 70.83871 337.935484 
L 70.83871 46.064516 
" clip-path="url(#p1a51e9b3a9)" style="fill: none; stroke-dasharray: 3.7,1.6; stroke-dashoffset: 0; stroke: #008000"/>
</g>
<g id="line2d_18">
<path d="M 370.451613 337.935484 
L 370.451613 46.064516 
" clip-path="url(#p1a51e9b3a9)" style="fill: none; stroke-dasharray: 3.7,1.6; stroke-dashoffset: 0; stroke: #008000"/>
</g>
<g id="patch_3">
<path d="M 53.806452 337.935484 
L 53.806452 46.064516 
" style="fill: none; stroke: #000000; stroke-width: 0.8; stroke-linejoin: miter; stroke-linecap: square"/>
</g>
<g id="patch_4">
<path d="M 387.483871 337.935484 
L 387.483871 46.064516 
" style="fill: none; stroke: #000000; stroke-width: 0.8; stroke-linejoin: miter; stroke-linecap: square"/>
</g>
<g id="patch_5">
<path d="M 53.806452 337.935484 
L 387.483871 337.935484 
" style="fill: none; stroke: #000000; stroke-width: 0.8; stroke-linejoin: miter; stroke-linecap: square"/>
</g>
<g id="patch_6">
<path d="M 53.806452 46.064516 
L 387.483871 46.064516 
" style="fill: none; stroke: #000000; stroke-width: 0.8; stroke-linejoin: miter; stroke-linecap: square"/>
</g>
<g id="text_15">
<!-- HRP39182 -->
<g transform="translate(188.716663 39.264516) scale(0.12 -0.12)">
<defs>
<path id="DejaVuSans-48" d="M 628 4666 
L 1259 4666 
L 1259 2753 
L 3553 2753 
L 3553 4666 
L 4184 4666 
L 4184 0 
L 3553 0 
L 3553 2222 
L 1259 2222 
L 1259 0 
L 628 0 
L 628 4666 
z
" transform="scale(0.015625)"/>
<path id="DejaVuSans-52" d="M 2841 2188 
Q 3044 2119 3236 1894 
Q 3428 1669 3622 1275 
L 4263 0 
L 3584 0 
L 2988 1197 
Q 2756 1666 2539 1819 
Q 2322 1972 1947 1972 
L 1259 1972 
L 1259 0 
L 628 0 
L 628 4666 
L 2053 4666 
Q 2853 4666 3247 4331 
Q 3641 3997 3641 3322 
Q 3641 2881 3436 2590 
Q 3231 2300 2841 2188 
z
M 1259 4147 
L 1259 2491 
L 2053 2491 
Q 2509 2491 2742 2702 
Q 2975 2913 2975 3322 
Q 2975 3731 2742 3939 
Q 2509 4147 2053 4147 
L 1259 4147 
z
" transform="scale(0.015625)"/>
<path id="DejaVuSans-50" d="M 1259 4147 
L 1259 2394 
L 2053 2394 
Q 2494 2394 2734 2622 
Q 2975 2850 2975 3272 
Q 2975 3691 2734 3919 
Q 2494 4147 2053 4147 
L 1259 4147 
z
M 628 4666 
L 2053 4666 
Q 2838 4666 3239 4311 
Q 3641 3956 3641 3272 
Q 3641 2581 3239 2228 
Q 2838 1875 2053 1875 
L 1259 1875 
L 1259 0 
L 628 0 
L 628 4666 
z
" transform="scale(0.015625)"/>
<path id="DejaVuSans-38" d="M 2034 2216 
Q 1584 2216 1326 1975 
Q 1069 1734 1069 1313 
Q 1069 891 1326 650 
Q 1584 409 2034 409 
Q 2484 409 2743 651 
Q 3003 894 3003 1313 
Q 3003 1734 2745 1975 
Q 2488 2216 2034 2216 
z
M 1403 2484 
Q 997 2584 770 2862 
Q 544 3141 544 3541 
Q 544 4100 942 4425 
Q 1341 4750 2034 4750 
Q 2731 4750 3128 4425 
Q 3525 4100 3525 3541 
Q 3525 3141 3298 2862 
Q 3072 2584 2669 2484 
Q 3125 2378 3379 2068 
Q 3634 1759 3634 1313 
Q 3634 634 3220 271 
Q 2806 -91 2034 -91 
Q 1263 -91 848 271 
Q 434 634 434 1313 
Q 434 1759 690 2068 
Q 947 2378 1403 2484 
z
M 1172 3481 
Q 1172 3119 1398 2916 
Q 1625 2713 2034 2713 
Q 2441 2713 2670 2916 
Q 2900 3119 2900 3481 
Q 2900 3844 2670 4047 
Q 2441 4250 2034 4250 
Q 1625 4250 1398 4047 
Q 1172 3844 1172 3481 
z
" transform="scale(0.015625)"/>
</defs>
<use href="#DejaVuSans-48"/>
<use href="#DejaVuSans-52" transform="translate(75.195312 0)"/>
<use href="#DejaVuSans-50" transform="translate(144.677734 0)"/>
<use href="#DejaVuSans-33" transform="translate(204.980469 0)"/>
<use href="#DejaVuSans-39" transform="translate(268.603516 0)"/>
<use href="#DejaVuSans-31" transform="translate(332.226562 0)"/>
<use href="#DejaVuSans-38" transform="translate(395.849609 0)"/>
<use href="#DejaVuSans-32" transform="translate(459.472656 0)"/>
</g>
</g>
</g>
<g id="patch_7">
<path d="M 244.87742 85.548387 
L 367.664515 85.548387 
Q 369.677419 85.548387 369.677419 83.535483 
L 369.677419 54.270969 
Q 369.677419 52.258065 367.664515 52.258065 
L 244.87742 52.258065 
Q 242.864516 52.258065 242.864516 54.270969 
L 242.864516 83.535483 
Q 242.864516 85.548387 244.87742 85.548387 
z
" style="fill: #ffffff; fill-opacity: 0.8; stroke: #cccccc; stroke-linejoin: miter"/>
</g>
<g id="line2d_19">
<path d="M 246.03871 60.232258 
L 266.322581 60.232258 
" style="fill: none; stroke: #1f77b4; stroke-width: 1.5; stroke-linecap: square"/>
</g>
<g id="line2d_20">
<path d="M 246.03871 75.019355 
L 266.322581 75.019355 
" style="fill: none; stroke: #ff7f0e; stroke-width: 1.5; stroke-linecap: square"/>
</g>
<g id="text_16">
<!-- HRP39182: spec 1 -->
<g transform="translate(273.677419 63.63871) scale(0.1008 -0.1008)">
<defs>
<path id="DejaVuSans-3a" d="M 750 794 
L 1409 794 
L 1409 0 
L 750 0 
L 750 794 
z
M 750 3309 
L 1409 3309 
L 1409 2516 
L 750 2516 
L 750 3309 
z
" transform="scale(0.015625)"/>
<path id="DejaVuSans-70" d="M 1159 525 
L 1159 -1331 
L 581 -1331 
L 581 3500 
L 1159 3500 
L 1159 2969 
Q 1341 3281 1617 3432 
Q 1894 3584 2278 3584 
Q 2916 3584 3314 3078 
Q 3713 2572 3713 1747 
Q 3713 922 3314 415 
Q 2916 -91 2278 -91 
Q 1894 -91 1617 61 
Q 1341 213 1159 525 
z
M 3116 1747 
Q 3116 2381 2855 2742 
Q 2594 3103 2138 3103 
Q 1681 3103 1420 2742 
Q 1159 2381 1159 1747 
Q 1159 1113 1420 752 
Q 1681 391 2138 391 
Q 2594 391 2855 752 
Q 3116 1113 3116 1747 
z
" transform="scale(0.015625)"/>
<path id="DejaVuSans-63" d="M 3122 3366 
L 3122 2828 
Q 2878 2963 2633 3030 
Q 2388 3097 2138 3097 
Q 1578 3097 1268 2742 
Q 959 2388 959 1747 
Q 959 1106 1268 751 
Q 1578 397 2138 397 
Q 2388 397 2633 464 
Q 2878 531 3122 666 
L 3122 134 
Q 2881 22 2623 -34 
Q 2366 -91 2075 -91 
Q 1284 -91 818 406 
Q 353 903 353 1747 
Q 353 2603 823 3093 
Q 1294 3584 2113 3584 
Q 2378 3584 2631 3529 
Q 2884 3475 3122 3366 
z
" transform="scale(0.015625)"/>
</defs>
<use href="#DejaVuSans-48"/>
<use href="#DejaVuSans-52" transform="translate(75.195312 0)"/>
<use href="#DejaVuSans-50" transform="translate(144.677734 0)"/>
<use href="#DejaVuSans-33" transform="translate(204.980469 0)"/>
<use href="#DejaVuSans-39" transform="translate(268.603516 0)"/>
<use href="#DejaVuSans-31" transform="translate(332.226562 0)"/>
<use href="#DejaVuSans-38" transform="translate(395.849609 0)"/>
<use href="#DejaVuSans-32" transform="translate(459.472656 0)"/>
<use href="#DejaVuSans-3a" transform="translate(523.095703 0)"/>
<use href="#DejaVuSans-20" transform="translate(556.787109 0)"/>
<use href="#DejaVuSans-73" transform="translate(588.574219 0)"/>
<use href="#DejaVuSans-70" transform="translate(640.673828 0)"/>
<use href="#DejaVuSans-65" transform="translate(704.150391 0)"/>
<use href="#DejaVuSans-63" transform="translate(765.673828 0)"/>
<use href="#DejaVuSans-20" transform="translate(820.654297 0)"/>
<use href="#DejaVuSans-31" transform="translate(852.441406 0)"/>
</g>
</g>
<g id="text_17">
<!-- HRP39182_guess -->
<g transform="translate(274.451613 78.967742) scale(0.1008 -0.1008)">
<defs>
<path id="DejaVuSans-5f" d="M 3263 -1063 
L 3263 -1509 
L -63 -1509 
L -63 -1063 
L 3263 -1063 
z
" transform="scale(0.015625)"/>
</defs>
<use href="#DejaVuSans-48"/>
<use href="#DejaVuSans-52" transform="translate(75.195312 0)"/>
<use href="#DejaVuSans-50" transform="translate(144.677734 0)"/>
<use href="#DejaVuSans-33" transform="translate(204.980469 0)"/>
<use href="#DejaVuSans-39" transform="translate(268.603516 0)"/>
<use href="#DejaVuSans-31" transform="translate(332.226562 0)"/>
<use href="#DejaVuSans-38" transform="translate(395.849609 0)"/>
<use href="#DejaVuSans-32" transform="translate(459.472656 0)"/>
<use href="#DejaVuSans-5f" transform="translate(523.095703 0)"/>
<use href="#DejaVuSans-67" transform="translate(573.095703 0)"/>
<use href="#DejaVuSans-75" transform="translate(636.572266 0)"/>
<use href="#DejaVuSans-65" transform="translate(699.951172 0)"/>
<use href="#DejaVuSans-73" transform="translate(761.474609 0)"/>
<use href="#DejaVuSans-73" transform="translate(813.574219 0)"/>
</g>
</g>
</g>
<defs>
<clipPath id="p1a51e9b3a9">
<rect x="53.806452" y="46.064516" width="333.677419" height="291.870968"/>
</clipPath>
</defs>
</svg>
</div>
 <div id="status"><div class="abs" style="left:3px;top:2px;width:1px;height:16px;background:#d0d0d0"></div></div>
</div>
<svg style="position:absolute;left:0;top:0;pointer-events:none" width="894" height="608" viewBox="0 0 894 608">
<!-- app icon -->
<g>
 <path d="M23.6 22.6 H34.6" stroke="#8a8a8a" stroke-width="1.4" stroke-linecap="round"/>
 <path d="M25.2 24 V28.8 M27.2 24.3 H31 M32.7 24 V27" stroke="#9a9a9a" stroke-width="1" fill="none"/>
 <path d="M28 26.4 Q30.8 27.2 31.9 30.8 M38.2 24.3 Q35 26.5 34.2 30.8" stroke="#3d8f4b" stroke-width="1.2" fill="none"/>
 <ellipse cx="33" cy="32.4" rx="3.9" ry="1.5" fill="#3d8f4b"/>
 <path d="M31.8 33.5 L32.2 37.7 H35 L35.4 33.5 Z" fill="#3d8f4b"/>
</g>
<!-- window buttons -->
<rect x="755.5" y="30" width="10.5" height="1" fill="#000"/>
<rect x="801.5" y="25.5" width="9" height="9" fill="none" stroke="#000" stroke-width="1"/>
<path d="M846.7 25 L857 35.3 M857 25 L846.7 35.3" stroke="#000" stroke-width="1.05"/>
<!-- grip -->
<g fill="#a8a8a8"><path d="M20.5 50.5 h1.5 v1.5 h-2 z M20.5 54.4 h1.5 v1.5 h-2 z M20.5 58.3 h1.5 v1.5 h-2 z M20.5 62.3 h1.5 v1.5 h-2 z M20.5 66.3 h1.5 v1.5 h-2 z M20.5 70.2 h1.5 v1.5 h-2 z"/></g>
<!-- home -->
<path d="M38.45 55.6 L46.3 62.6 H44 V69 H40.4 V64 H37 V69 H32.9 V62.6 H30.6 Z" fill="#000"/>
<!-- back / forward -->
<path d="M74.2 62.6 H62.4 M68.2 56.8 L62.3 62.6 L68.2 68.5" stroke="#000" stroke-width="1.9" fill="none"/>
<path d="M90 62.6 H101.6 M96.1 56.8 L101.8 62.6 L96.1 68.5" stroke="#c4c4c4" stroke-width="1.9" fill="none"/>
<!-- separators -->
<g fill="#d5d5d5"><rect x="114" y="51" width="1" height="22"/><rect x="178" y="51" width="1" height="22"/><rect x="271" y="51" width="1" height="22"/><rect x="306" y="51" width="1" height="22"/><rect x="341" y="51" width="1" height="22"/><rect x="372" y="51" width="1" height="22"/></g>
<!-- move -->
<g stroke="#000" fill="none">
 <path d="M131.5 56.5 V69 M125.3 62.7 H137.7" stroke-width="1.55"/>
 <path d="M128.8 58.8 L131.5 56.1 L134.2 58.8 M128.8 66.5 L131.5 69.2 L134.2 66.5 M127.7 60 L125 62.7 L127.7 65.4 M135.3 60 L138 62.7 L135.3 65.4" stroke-width="2.1" stroke-linejoin="round"/>
</g>
<!-- zoom -->
<circle cx="158.4" cy="60.8" r="4.3" stroke="#000" stroke-width="1.9" fill="none"/>
<path d="M161.6 64.1 L166.3 68.6" stroke="#000" stroke-width="2.1"/>
<!-- grid -->
<rect x="187.8" y="54.9" width="15.4" height="15.7" rx="1.6" fill="#000"/>
<g fill="#f0f0f0">
 <rect x="189.2" y="56.5" width="3" height="3.2"/><rect x="193.9" y="56.5" width="3" height="3.2"/><rect x="198.6" y="56.5" width="3" height="3.2"/>
 <rect x="189.2" y="61.1" width="3" height="3.2"/><rect x="193.9" y="61.1" width="3" height="3.2"/><rect x="198.6" y="61.1" width="3" height="3.2"/>
 <rect x="189.2" y="65.8" width="3" height="3.2"/><rect x="193.9" y="65.8" width="3" height="3.2"/><rect x="198.6" y="65.8" width="3" height="3.2"/>
</g>
<!-- save -->
<path d="M217.2 56.8 Q217.2 55.8 218.2 55.8 H228.2 L232 59.6 V68.8 Q232 69.8 231 69.8 H218.2 Q217.2 69.8 217.2 68.8 Z" fill="#000"/>
<rect x="218.9" y="57.1" width="8.1" height="3.6" fill="#f0f0f0"/>
<circle cx="224.7" cy="66" r="2.5" fill="#f0f0f0"/>
<!-- print -->
<rect x="249.1" y="56" width="9" height="2.7" fill="#000"/>
<path d="M245.7 61.2 Q245.7 59.9 247 59.9 H260.2 Q261.5 59.9 261.5 61.2 V66.4 H258.5 V69.9 H248.7 V66.4 H245.7 Z" fill="#000"/>
<rect x="250.4" y="64.4" width="6" height="3.7" fill="#f0f0f0"/>
<rect x="258.1" y="61.4" width="1.6" height="1.6" fill="#f0f0f0"/>
<!-- gear -->
<path transform="translate(288.5 62.9) scale(0.854) translate(-12 -12)" fill="#000" d="M19.14 12.94c.04-.3.06-.61.06-.94 0-.32-.02-.64-.07-.94l2.03-1.58c.18-.14.23-.41.12-.61l-1.92-3.32c-.12-.22-.37-.29-.59-.22l-2.39.96c-.5-.38-1.03-.7-1.62-.94l-.36-2.54c-.04-.24-.24-.41-.48-.41h-3.84c-.24 0-.43.17-.47.41l-.36 2.540c-.59.24-1.130.57-1.62.94l-2.39-.96c-.22-.08-.47 0-.59.22L2.74 8.87c-.12.21-.08.47.12.61l2.03 1.58c-.05.3-.09.63-.09.94s.02.64.07.94l-2.03 1.58c-.18.14-.23.41-.12.61l1.92 3.32c.12.22.37.29.59.22l2.39-.96c.5.38 1.03.7 1.62.94l.36 2.54c.05.24.24.41.48.41h3.84c.24 0 .44-.17.47-.41l.36-2.54c.59-.24 1.13-.56 1.62-.94l2.39.96c.22.08.47 0 .59-.22l1.920-3.32c.12-.22.07-.47-.12-.61l-2.01-1.58zM12 15.6c-1.98 0-3.6-1.62-3.6-3.6s1.62-3.6 3.6-3.6 3.6 1.62 3.6 3.6-1.62 3.6-3.6 3.6z"/>
<!-- script -->
<g stroke="#000" fill="none" stroke-width="1.7">
 <path d="M319.6 68.2 V55.6 H330 Q331.6 55.6 331.6 57.6"/>
 <path d="M327.4 55.6 V69.3"/>
 <path d="M321.6 58.9 H325 M321.6 61.9 H325 M321.6 65.1 H325" stroke-width="1.5"/>
 <path d="M327.4 69.4 H317 Q315.9 69.4 316 68.4 H319.6" stroke-width="2"/>
</g>
<path d="M329.8 69.2 H335.2 L332.5 72.1 Z" fill="#000"/>
<!-- Fit toggle -->
<rect x="345.5" y="52.5" width="24" height="17" fill="#cce4f7" stroke="#99d1ff" stroke-width="1"/>
<!-- scroll arrows -->
<path d="M294.2 170 L297.5 164.9 L300.8 170 M294.2 546.9 L297.5 552 L300.8 546.9" stroke="#454545" stroke-width="2.2" fill="none"/>
<!-- resize grip -->
<g fill="#b8b8b8"><rect x="870" y="578" width="2" height="2"/><rect x="870" y="581" width="2" height="2"/><rect x="870" y="584" width="2" height="2"/><rect x="867" y="581" width="2" height="2"/><rect x="867" y="584" width="2" height="2"/><rect x="864" y="584" width="2" height="2"/></g>
</svg>

<div class="abs" style="left:350.5px;top:57px;font-size:12px;letter-spacing:-0.1px">Fit</div>
</body></html>
